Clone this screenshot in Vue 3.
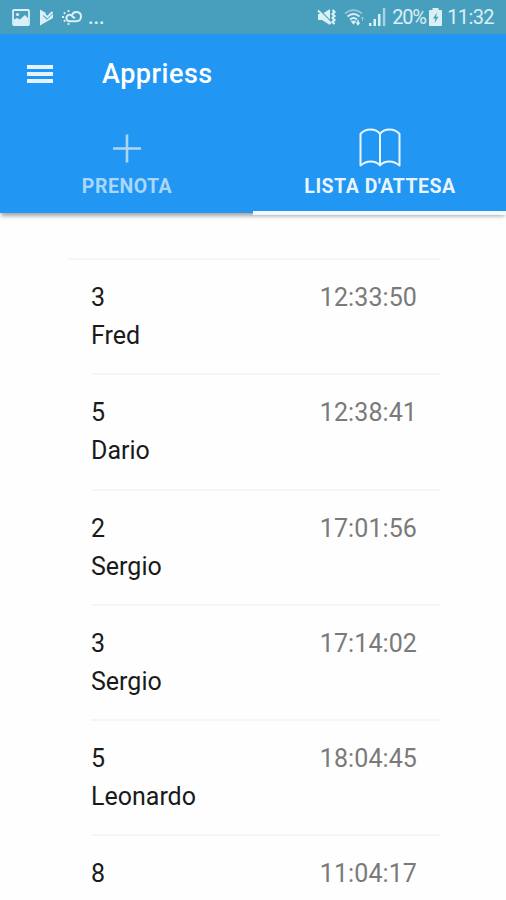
<script setup>
import {ref} from 'vue'

const activeTab=ref(1)//0 = prenota, 1 = lista d'attesa

const tabs=['Prenota',"Lista d'attesa"]

const waitingList=ref([
  {seats:3,name:'Fred',time:'12:33:50'},
  {seats:5,name:'Dario',time:'12:38:41'},
  {seats:2,name:'Sergio',time:'17:01:56'},
  {seats:3,name:'Sergio',time:'17:14:02'},
  {seats:5,name:'Leonardo',time:'18:04:45'},
  {seats:8,name:'',time:'11:04:17'}
])
</script>

<template>
  <main class="app">
    <div class="status">
      <div class="notifications">
        <svg class="picture" width="18" height="17" viewBox="0 0 18 17">
          <rect x="1" y="1" width="16" height="15" rx="1" fill="none" stroke="currentColor" stroke-width="1.8"/>
          <circle cx="5.5" cy="5.5" r="1.6" fill="currentColor"/>
          <path d="M2 10.500l3-1.500 3 1.500 5-4.500 3 3v6.500H2z" fill="currentColor"/>
        </svg>
        <svg class="play" width="16" height="17" viewBox="0 0 16 17">
          <path d="M1 .5l6 3.500L5.500 6l3 3L14 3.500V9L1 16.500z" fill="currentColor"/>
          <path d="M4.500 6.500l3.500 3.500 6.500-6.500" fill="none" stroke="#489fbd" stroke-width="1.200"/>
          <path d="M5.500 5.500l2.700 2.700L13.500 3" fill="none" stroke="currentColor" stroke-width="2"/>
        </svg>
        <svg class="weather" width="20" height="16" viewBox="0 0 20 16" fill="none" stroke="currentColor">
          <path d="M7 12.200h7.500a4.600 4.600 0 1 0-4.500-6" stroke-width="2"/>
          <path d="M7.500 12.200a3.200 3.200 0 1 1 3-4.500l2.500 1.500" stroke-width="2"/>
          <path d="M0 8h2M1.800 3.500l1.500 1.200M6.500 1v2M1.800 12.500l1.500-1.200M6.500 14v2" stroke-width="1.800"/>
        </svg>
        <span class="more">...</span>
      </div>
      <div class="system">
        <svg class="mute" width="21" height="18" viewBox="0 0 21 18">
          <path d="M2 6h4l8-5v16l-8-5H2z" fill="currentColor"/>
          <path d="M3.500 2l11 11" stroke="#489fbd" stroke-width="1.200"/>
          <path d="M2 2.500l13 13" stroke="currentColor" stroke-width="2"/>
          <path d="M16.500 2l2 2-2 2 2 2-2 2 2 2-2 2 2 2" fill="none" stroke="currentColor" stroke-width="2.200"/>
        </svg>
        <svg class="wifi" width="22" height="18" viewBox="0 0 22 18" fill="none" stroke="currentColor" stroke-width="1.700">
          <path d="M1 5.500q8.500-7 17 0" opacity=".5"/>
          <path d="M3.500 8.500q6-5 12 0M6 11.500q3.500-3 7 0"/>
          <path d="M8 13.500h3l-1.500 2zM14 12v4M12.500 14.500l1.500 2 1.500-2" stroke-width="1.500"/>
          <path d="M18.500 9v4M17 10.500L18.500 9l1.500 1.500" stroke-width="1" opacity=".5"/>
        </svg>
        <svg class="signal" width="17" height="18" viewBox="0 0 17 18" fill="currentColor">
          <path d="M0 15h2.500v3H0zM4.500 11H7v7H4.500zM9 6h2.500v12H9z"/>
          <path d="M13.800 0h2.500v18h-2.500z" opacity=".65"/>
        </svg>
        <span class="percent">20%</span>
        <svg class="battery" width="13" height="18" viewBox="0 0 13 18">
          <path d="M3.500 0h6v2H12a1 1 0 0 1 1 1v14a1 1 0 0 1-1 1H1a1 1 0 0 1-1-1V3a1 1 0 0 1 1-1h2.500z" fill="currentColor"/>
          <path d="M8 4.500L4 10.500h2.500L5.500 15l4-6.200H7z" fill="#489fbd"/>
        </svg>
        <span class="clock">11:32</span>
      </div>
    </div>

    <header class="header">
      <div class="toolbar">
        <button class="menu" aria-label="Menu">
          <span></span>
          <span></span>
          <span></span>
        </button>
        <h1>Appriess</h1>
      </div>
      <nav class="tabs">
        <button
          v-for="(tab,index) in tabs"
          :key="tab"
          :class="['tab',{active:activeTab==index}]"
          @click="activeTab=index">
          <svg v-if="index==0" width="42" height="40" viewBox="0 0 42 40" fill="none" stroke="currentColor" stroke-width="2.600">
            <path d="M21 6.500v28M7 20.500h28"/>
          </svg>
          <svg v-else width="42" height="40" viewBox="0 0 42 40" fill="none" stroke="currentColor" stroke-width="2" stroke-linejoin="round">
            <path d="M21 6C19 3 15.500 1.500 11.500 1.500S4 3 1.500 6v31.500c3-2.500 6-4 10-4s7.500 1.500 9.500 4c2-2.500 5.500-4 9.500-4s7 1.500 10 4V6C38 3 34.500 1.500 30.500 1.500S23 3 21 6z"/>
            <path d="M21 6v31.500"/>
          </svg>
          <span>{{tab}}</span>
        </button>
      </nav>
    </header>

    <ul class="list">
      <li v-for="(item,index) in waitingList" :key="index" class="item">
        <div class="booking">
          <p>{{item.seats}}</p>
          <p v-if="item.name">{{item.name}}</p>
        </div>
        <time>{{item.time}}</time>
      </li>
    </ul>
  </main>
</template>

<style>
  body{
    margin: 0;
    background-color: #fefefe;
  }
</style>

<style scoped>
  *{
    margin: 0;
    padding: 0;
    box-sizing: border-box;
  }

  .app{
    height: 900px;
    overflow: hidden;
    font-family: Roboto,sans-serif;
    color: #1a1a1a;
  }

  svg{
    display: block;
    flex: none;
  }

  .status{
    display: flex;
    justify-content: space-between;
    height: 34px;
    padding: 0 12px 0 12px;
    background-color: #489fbd;
    color: #d9f0f7;
    font-size: 20px;
    line-height: 37px;
  }
  .notifications,
  .system{
    display: flex;
    align-items: center;
  }
  .play{
    margin-left: 9px;
  }
  .weather{
    margin-left: 7px;
  }
  .more{
    margin-left: 6px;
    font-weight: 500;
  }
  .wifi{
    margin-left: 7px;
  }
  .signal{
    margin-left: 3px;
  }
  .percent{
    margin-left: 6px;
    width: 34px;
    font-size: 20px;
    letter-spacing: -1.2px;
  }
  .battery{
    margin-left: 3px;
  }
  .clock{
    margin-left: 5px;
    letter-spacing: -0.6px;
  }

  .header{
    height: 179px;
    background-color: #2196f3;
    box-shadow: 0 4px 4px -1px rgba(0,0,0,0.35);
  }
  .toolbar{
    display: flex;
    align-items: center;
    height: 80px;
    padding-left: 27px;
  }
  .menu{
    display: flex;
    flex-direction: column;
    gap: 3px;
    width: 26px;
    border: none;
    background: none;
  }
  .menu span{
    height: 4px;
    background-color: #e4f2fe;
  }
  h1{
    margin-left: 49px;
    color: #fff;
    font-size: 27px;
    font-weight: 500;
    line-height: 32px;
    letter-spacing: 0.5px;
  }

  .tabs{
    display: flex;
    height: 101px;
  }
  .tab{
    display: flex;
    flex: 1;
    flex-direction: column;
    align-items: center;
    padding-top: 14px;
    border: none;
    border-bottom: 4px solid transparent;
    background: none;
    color: #a9d7fa;
    font-family: inherit;
    font-size: 19.5px;
    font-weight: 700;
    line-height: 24px;
    letter-spacing: 0.5px;
    text-transform: uppercase;
    cursor: pointer;
  }
  .tab span{
    margin-top: 7px;
    padding-left: 1px;
  }
  .tab.active{
    border-bottom-color: #f2fafe;
    color: #e9f5fe;
  }

  .list{
    margin: 45px 65px 0 68px;
    border-top: 2px solid #f6f6f6;
    list-style: none;
  }
  .item{
    display: flex;
    justify-content: space-between;
    height: 115.3px;
    margin-left: 23px;
    padding: 19px 24px 0 0;
    border-bottom: 2px solid #f6f6f6;
    font-size: 25px;
    line-height: 38px;
  }
  .item time{
    color: #7a7a7a;
    letter-spacing: 0.1px;
  }
</style>
